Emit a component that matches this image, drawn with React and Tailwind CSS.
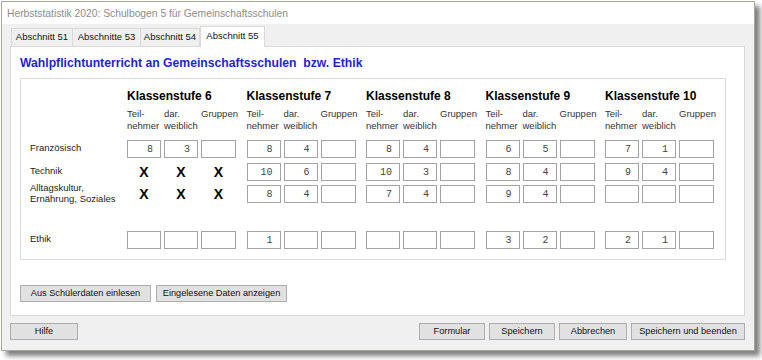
const classes = [
  { name: 'Klassenstufe 6', rows: [['8', '3', ''], 'x', 'x', ['', '', '']] },
  { name: 'Klassenstufe 7', rows: [['8', '4', ''], ['10', '6', ''], ['8', '4', ''], ['1', '', '']] },
  { name: 'Klassenstufe 8', rows: [['8', '4', ''], ['10', '3', ''], ['7', '4', ''], ['', '', '']] },
  { name: 'Klassenstufe 9', rows: [['6', '5', ''], ['8', '4', ''], ['9', '4', ''], ['3', '2', '']] },
  { name: 'Klassenstufe 10', rows: [['7', '1', ''], ['9', '4', ''], ['', '', ''], ['2', '1', '']] },
]

const rowLabels = [
  { label: ['Französisch'], mt: 'mt-[8px]' },
  { label: ['Technik'], mt: 'mt-[5px]' },
  { label: ['Alltagskultur,', 'Ernährung, Soziales'], mt: 'mt-[4px]' },
  { label: ['Ethik'], mt: 'mt-[28px]' },
]

function Field({ value, wide }) {
  return (
    <div
      className={`${wide ? 'w-[35px]' : 'w-[34px]'} h-[18px] border border-[#a3a3a3] bg-white flex items-center justify-end pr-[7px] font-['Liberation_Mono',monospace] text-[10px] text-[#444]`}
    >
      {value}
    </div>
  )
}

function Cells({ cells }) {
  if (cells === 'x') {
    return (
      <div className="flex gap-[3px] h-[18px]">
        {[0, 1, 2].map((i) => (
          <div
            key={i}
            className={`${i === 2 ? 'w-[35px]' : 'w-[34px]'} flex items-center justify-center font-['Liberation_Sans',Arial,sans-serif] font-bold text-[14px] text-black`}
          >
            X
          </div>
        ))}
      </div>
    )
  }
  return (
    <div className="flex gap-[3px]">
      <Field value={cells[0]} />
      <Field value={cells[1]} />
      <Field value={cells[2]} wide />
    </div>
  )
}

function Btn({ children, w }) {
  return (
    <button
      className={`${w} h-[17px] bg-[#e1e1e1] border border-[#adadad] text-[9.2px] leading-none text-[#111] font-['Liberation_Sans',Arial,sans-serif] flex items-center justify-center`}
    >
      {children}
    </button>
  )
}

export default function App() {
  return (
    <div className="w-[762px] h-[360px] bg-white pt-[1px] pl-[1px] font-['Liberation_Sans',Arial,sans-serif]">
      <div className="w-[754px] h-[350px] border border-[#a9a99a] bg-[#f0f0f0] flex flex-col shadow-[5px_5px_5px_rgba(0,0,0,0.5)]">
        {/* Title bar */}
        <div className="h-[22px] bg-white flex items-center pl-[5px] pt-[1px] text-[10.3px] text-[#8c8c8c]">
          Herbststatistik 2020: Schulbogen 5 für Gemeinschaftsschulen
        </div>

        <div className="flex-1 pt-[2px] pl-[8px] pr-[9px]">
          {/* Tabs */}
          <div className="flex items-end h-[20px] pl-[1px] text-[9.5px] text-[#111]">
            <div className="w-[62px] h-[18px] border border-b-0 border-[#d9d9d9] flex items-center justify-center">Abschnitt 51</div>
            <div className="w-[68px] h-[18px] border border-b-0 border-l-0 border-[#d9d9d9] flex items-center justify-center">Abschnitte 53</div>
            <div className="w-[59px] h-[18px] border border-b-0 border-l-0 border-[#d9d9d9] flex items-center justify-center">Abschnitt 54</div>
            <div className="relative z-10 -mb-px w-[65px] h-[21px] bg-white border border-b-0 border-[#d9d9d9] flex items-center justify-center pb-[2px]">Abschnitt 55</div>
          </div>

          {/* Tab panel */}
          <div className="h-[270px] border border-[#d9d9d9] bg-white pt-[8px] pl-[9px]">
            <div className="h-[16px] flex items-center font-bold text-[12.2px] text-[#1f1fd6] whitespace-pre">
              Wahlpflichtunterricht an Gemeinschaftsschulen  bzw. Ethik
            </div>

            {/* Group box */}
            <div className="mt-[7px] w-[706px] h-[182px] border border-[#dcdcdc] pt-[9px] pl-[9px] flex">
              <div className="w-[97px] flex flex-col text-[9.5px] text-[#222] leading-[11px]">
                <div className="h-[16px]" />
                <div className="h-[24px] mt-[4px]" />
                {rowLabels.map((r) => (
                  <div key={r.label[0]} className={`${r.mt} h-[18px] flex flex-col justify-center pb-[3px]`}>
                    {r.label.map((l) => (
                      <span key={l} className="whitespace-nowrap">{l}</span>
                    ))}
                  </div>
                ))}
              </div>

              <div className="flex gap-[10.5px]">
                {classes.map((c) => (
                  <div key={c.name} className="w-[109px] flex flex-col">
                    <div className="h-[16px] flex items-center font-bold text-[12px] text-black whitespace-nowrap">{c.name}</div>
                    <div className="mt-[4px] h-[24px] flex gap-[3px] text-[9.5px] leading-[12px] text-[#333]">
                      <div className="w-[34px]">Teil-<br />nehmer</div>
                      <div className="w-[34px]">dar.<br />weiblich</div>
                      <div className="w-[35px]">Gruppen</div>
                    </div>
                    {c.rows.map((cells, i) => (
                      <div key={i} className={rowLabels[i].mt}>
                        <Cells cells={cells} />
                      </div>
                    ))}
                  </div>
                ))}
              </div>
            </div>

            <div className="mt-[25px] flex gap-[5px]">
              <Btn w="w-[131px]">Aus Schülerdaten einlesen</Btn>
              <Btn w="w-[131px]">Eingelesene Daten anzeigen</Btn>
            </div>
          </div>

          {/* Bottom buttons */}
          <div className="mt-[7px] flex">
            <Btn w="w-[68px]">Hilfe</Btn>
            <div className="ml-auto flex gap-[4px]">
              <Btn w="w-[66px]">Formular</Btn>
              <Btn w="w-[66px]">Speichern</Btn>
              <Btn w="w-[68px]">Abbrechen</Btn>
              <Btn w="w-[114px]">Speichern und beenden</Btn>
            </div>
          </div>
        </div>
      </div>
    </div>
  )
}
